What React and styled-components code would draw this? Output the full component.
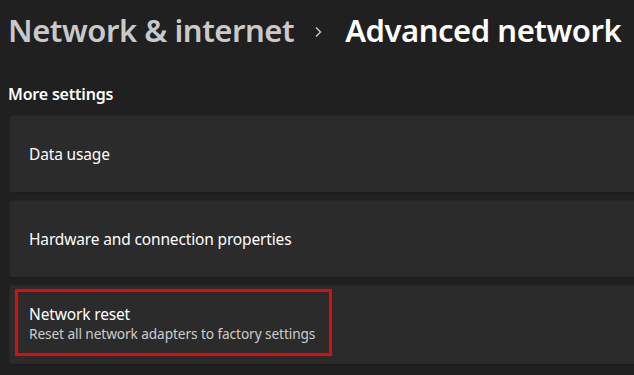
import React from "react";
import styled, { createGlobalStyle } from "styled-components";

const GlobalStyle = createGlobalStyle`
  html, body {
    margin: 0;
    padding: 0;
    background: #202020;
    overflow: hidden;
  }
  body {
    font-family: "Noto Sans", "Open Sans", sans-serif;
    color: #ffffff;
  }
`;

const Page = styled.div`
  width: 700px;
  height: 375px;
  padding: 10px 0 0 8px;
  box-sizing: border-box;
  background: #202020;
`;

const Breadcrumb = styled.h1`
  display: flex;
  align-items: center;
  margin: 0;
  height: 40px;
  font-size: 31px;
  font-weight: 600;
  letter-spacing: -0.45px;
  white-space: nowrap;
`;

const Crumb = styled.span`
  color: ${(p) => (p.current ? "#ffffff" : "#c9c9c9")};
`;

const Chevron = styled.svg`
  width: 8px;
  height: 12px;
  margin: 4px 23px 0 20px;
`;

const SectionTitle = styled.h2`
  margin: 33px 0 0 0;
  font-size: 16px;
  font-weight: 600;
  letter-spacing: -0.2px;
  line-height: 22px;
`;

const List = styled.div`
  display: flex;
  flex-direction: column;
  gap: 7px;
  margin: 10px 0 0 1px;
`;

const Card = styled.div`
  display: flex;
  align-items: center;
  height: ${(p) => p.h || 78}px;
  padding-left: 19px;
  background: #2b2b2b;
  border: 1px solid #262626;
  border-bottom-color: #1c1c1c;
  border-radius: 4px;
  box-sizing: border-box;
`;

const Label = styled.div`
  font-size: 15.5px;
  line-height: 20px;
  letter-spacing: -0.15px;
  color: #ffffff;
`;

const Sub = styled.div`
  font-size: 13.7px;
  line-height: 18px;
  letter-spacing: -0.1px;
  color: #cdcdcd;
`;

const Highlight = styled.div`
  margin: -6px 0 0 -14px;
  padding: 12px 14px 10px 11px;
  border: 3px solid #e10b0b;
  display: flex;
  flex-direction: column;
  gap: 1px;
`;

export default function App() {
  return (
    <Page>
      <GlobalStyle />
      <Breadcrumb>
        <Crumb>Network &amp; internet</Crumb>
        <Chevron viewBox="0 0 8 12">
          <path
            d="M2 1.5 L6.5 6 L2 10.5"
            fill="none"
            stroke="#c9c9c9"
            strokeWidth="1.4"
          />
        </Chevron>
        <Crumb current>Advanced network</Crumb>
      </Breadcrumb>
      <SectionTitle>More settings</SectionTitle>
      <List>
        <Card>
          <Label>Data usage</Label>
        </Card>
        <Card>
          <Label>Hardware and connection properties</Label>
        </Card>
        <Card h={80}>
          <Highlight>
            <Label>Network reset</Label>
            <Sub>Reset all network adapters to factory settings</Sub>
          </Highlight>
        </Card>
      </List>
    </Page>
  );
}
